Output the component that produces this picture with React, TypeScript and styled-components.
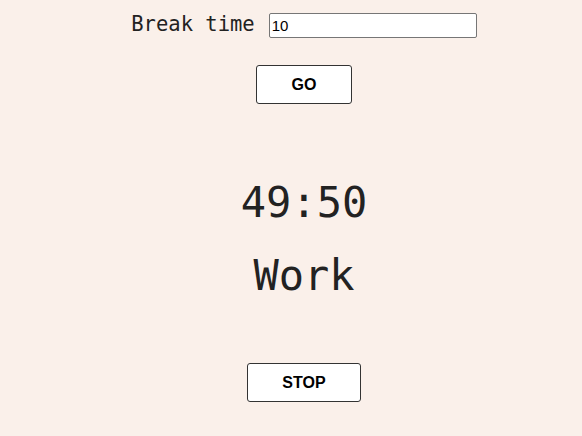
import React from "react";
import styled, { createGlobalStyle } from "styled-components";

const Global = createGlobalStyle`
  html, body { margin: 0; padding: 0; background: #faf0ea; }
  body { font-family: "DejaVu Sans Mono", monospace; color: #222; }
`;

const Page = styled.div`
  display: flex;
  flex-direction: column;
  align-items: center;
  padding: 13px 0 0 26px;
  min-height: 436px;
  box-sizing: border-box;
`;

const Row = styled.div`
  display: flex;
  align-items: center;
  gap: 14px;
  height: 25px;
`;

const Label = styled.label`
  font-family: "DejaVu Sans Mono", monospace;
  font-size: 20.5px;
  color: #222;
  margin-top: -4px;
`;

const Input = styled.input`
  width: 208px;
  height: 25px;
  box-sizing: border-box;
  border: 1px solid #767676;
  border-radius: 2px;
  background: #fff;
  font-family: "Liberation Sans", Arial, sans-serif;
  font-size: 15px;
  padding: 1px 2px;
  color: #000;
  outline: none;
`;

const Button = styled.button<{ $w: number; $mt: number }>`
  width: ${(p) => p.$w}px;
  height: 39px;
  margin-top: ${(p) => p.$mt}px;
  box-sizing: border-box;
  background: #fff;
  border: 1px solid #333;
  border-radius: 3px;
  font-family: "Liberation Sans", Arial, sans-serif;
  font-weight: bold;
  font-size: 16px;
  color: #000;
  cursor: pointer;
`;

const Big = styled.div<{ $mt: number }>`
  font-family: "DejaVu Sans Mono", monospace;
  font-size: 42px;
  line-height: 48px;
  color: #222;
  margin-top: ${(p) => p.$mt}px;
`;

export default function App() {
  return (
    <>
      <Global />
      <Page>
        <Row>
          <Label>Break time</Label>
          <Input defaultValue="10" />
        </Row>
        <Button $w={96} $mt={27}>GO</Button>
        <Big $mt={75}>49:50</Big>
        <Big $mt={25}>Work</Big>
        <Button $w={114} $mt={63}>STOP</Button>
      </Page>
    </>
  );
}
